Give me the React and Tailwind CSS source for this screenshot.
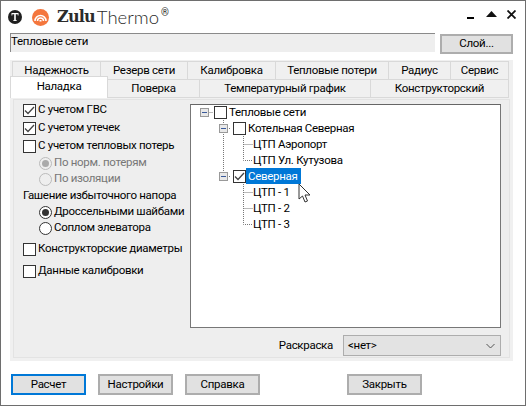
const font = "font-['Roboto',sans-serif]"

const topTabs = [
  ['Надежность', 'w-[88px]'],
  ['Резерв сети', 'w-[87px]'],
  ['Калибровка', 'w-[88px]'],
  ['Тепловые потери', 'w-[113px]'],
  ['Радиус', 'w-[62px]'],
  ['Сервис', 'w-[59px]'],
]

const bottomTabs = [
  ['Поверка', 'w-[92px]'],
  ['Температурный график', 'w-[171px]'],
  ['Конструкторский', 'w-[138px]'],
]

const Check = ({ checked }) => (
  <span className="w-[13px] h-[13px] shrink-0 border border-[#333] bg-white flex items-center justify-center">
    {checked && (
      <svg width="11" height="11" viewBox="0 0 11 11" fill="none" stroke="#444" strokeWidth="1.3">
        <path d="M1 5.5L4 8.5L10 2" />
      </svg>
    )}
  </span>
)

const Radio = ({ on, disabled }) => (
  <span className={`w-[13px] h-[13px] shrink-0 rounded-full border flex items-center justify-center ${disabled ? 'border-[#bbb] bg-[#eee]' : 'border-[#333] bg-white'}`}>
    {on && <span className={`w-[7px] h-[7px] rounded-full ${disabled ? 'bg-[#aaa]' : 'bg-[#333]'}`} />}
  </span>
)

const Toggle = () => (
  <span className="w-[9px] h-[9px] shrink-0 border border-[#999] bg-[#e8e8e8] flex items-center justify-center">
    <span className="w-[5px] h-px bg-[#3a5a9a]" />
  </span>
)

const Btn = ({ label, primary, className = '' }) => (
  <div className={`w-[75px] h-[21px] bg-[#e1e1e1] border-2 flex items-center justify-center text-black ${primary ? 'border-[#0078d7]' : 'border-[#adadad]'} ${className}`}>
    {label}
  </div>
)

const TreeRow = ({ pad, toggle, box, checked, selected, children }) => (
  <div className={`h-4 flex items-center ${pad}`}>
    {toggle && <Toggle />}
    {toggle && <span className="w-[5px]" />}
    {box && <Check checked={checked} />}
    <span className={`pl-[2px] pr-[3px] leading-4 h-4 ${selected ? 'bg-[#0078d7] text-white' : 'text-black'}`}>{children}</span>
  </div>
)

const Opt = ({ children, className = '' }) => (
  <div className={`flex items-center gap-[2px] whitespace-nowrap ${className}`}>{children}</div>
)

export default function App() {
  return (
    <div className={`${font} relative w-[526px] h-[406px] bg-white border border-[#6e6e6e] text-[11.5px] tracking-[-0.3px] overflow-hidden`}>
      {/* title */}
      <div className="h-[32px] pl-[7px] flex items-center tracking-normal">
        <svg width="42" height="17" viewBox="0 0 42 17" className="mt-[1px]">
          <circle cx="7" cy="8" r="7" fill="#1f1f1f" />
          <path d="M3.500 4h7v2.500h-.8V5.200H7.800v6h1v.8H5.200v-.8h1v-6H4.300v1.300h-.8z" fill="#fff" />
          <circle cx="32.500" cy="8.500" r="8.500" fill="#f4763d" />
          <path d="M27 12a5.500 5.500 0 0 1 11 0M29.500 12a3 3 0 0 1 6 0" fill="none" stroke="#fff" strokeWidth="1.500" />
          <rect x="31.500" y="11" width="2" height="1.500" fill="#fff" />
        </svg>
        <span className="ml-[7px] text-[#2b2b2b] flex items-start">
          <span className="font-['DejaVu_Serif',serif] font-bold text-[16px] leading-[24px] tracking-[-0.8px]">Zulu</span>
          <span className="font-['Lato',sans-serif] font-light text-[18.5px] leading-[24px] ml-[2px]">Thermo</span>
          <span className="text-[10px] ml-[2px] mt-[3px] leading-none">®</span>
        </span>
        <div className="ml-auto flex items-center pr-[9px]">
          <span className="w-[7px] h-[2px] bg-black mt-[2px]" />
          <svg width="11" height="6" viewBox="0 0 11 6" className="ml-[12px] mb-[7px]"><path d="M5.500 0L11 6H0z" fill="#111" /></svg>
          <svg width="9" height="9" viewBox="0 0 9 9" className="ml-[10px] mb-[5px]"><path d="M.5.500l8 8M8.500.500l-8 8" stroke="#111" strokeWidth="1.800" /></svg>
        </div>
      </div>

      {/* name field */}
      <div className="h-[21px] ml-[9px] flex items-start">
        <div className="w-[425px] h-[19px] bg-[#eeeeee] border-t border-l border-[#8a8a8a] leading-[15px] text-black truncate">Тепловые сети</div>
        <div className="w-[73px] h-[20px] ml-[5px] mt-px bg-[#e1e1e1] border-2 border-[#adadad] flex items-center justify-center text-black">Слой...</div>
      </div>

      {/* tabs */}
      <div className="mt-[6px] ml-[9px] w-[503px] h-[301px] bg-[#f0f0f0]">
        <div className="flex pl-[2px] pt-[1px] h-[19px]">
          {topTabs.map(([t, w]) => (
            <div key={t} className={`${w} h-[19px] border border-[#d9d9d9] border-r-0 last:border-r flex items-center justify-center text-black`}>{t}</div>
          ))}
        </div>
        <div className="flex items-end h-[19px]">
          <div className="relative z-10 w-[98px] h-[22px] -mt-[3px] bg-white border border-b-0 border-[#d9d9d9] flex items-center justify-center text-black pb-[2px]">Наладка</div>
          {bottomTabs.map(([t, w]) => (
            <div key={t} className={`${w} h-[19px] border border-l-0 border-[#d9d9d9] flex items-center justify-center text-black`}>{t}</div>
          ))}
        </div>

        {/* panel */}
        <div className="mt-[1px] mx-[3px] h-[259px] w-[497px] border border-[#e3e3e3] bg-[#eeeeee] flex">
          <div className="w-[176px] shrink-0 pl-[9px] pt-[1px] text-black">
            <Opt className="h-[18px]"><Check checked />С учетом ГВС</Opt>
            <Opt className="h-[18px]"><Check checked />С учетом утечек</Opt>
            <Opt className="h-[18px]"><Check />С учетом тепловых потерь</Opt>
            <Opt className="h-[16px] pl-[16px] text-[#777]"><Radio on disabled />По норм. потерям</Opt>
            <Opt className="h-[16px] pl-[16px] text-[#777]"><Radio disabled />По изоляции</Opt>
            <Opt className="h-[17px]">Гашение избыточного напора</Opt>
            <Opt className="h-[16px] pl-[16px]"><Radio on />Дроссельными шайбами</Opt>
            <Opt className="h-[16px] pl-[16px]"><Radio />Соплом элеватора</Opt>
            <Opt className="h-[18px] mt-[4px]"><Check />Конструкторские диаметры</Opt>
            <Opt className="h-[18px] mt-[4px]"><Check />Данные калибровки</Opt>
          </div>

          <div className="flex-1 pt-[4px] pr-[8px]">
            <div className="relative h-[224px] bg-white border border-[#777] border-t-[#666] pl-[9px] text-black">
              <svg width="120" height="130" className="absolute left-0 top-0" fill="none" stroke="#777" strokeDasharray="1 1">
                <path d="M18.500 7.500h4M32.500 15v52M36 23.500h4M36 71.500h4M52.500 31v24.500h9M52.500 39.500h9M52.500 79v40.500h9M52.500 87.500h9M52.500 103.500h9" />
              </svg>
              <div className="relative -mt-px">
                <TreeRow pad="pl-0" toggle box>Тепловые сети</TreeRow>
                <TreeRow pad="pl-[19px]" toggle box>Котельная Северная</TreeRow>
                <TreeRow pad="pl-[51px]">ЦТП Аэропорт</TreeRow>
                <TreeRow pad="pl-[51px]">ЦТП Ул. Кутузова</TreeRow>
                <TreeRow pad="pl-[19px]" toggle box checked selected>Северная</TreeRow>
                <TreeRow pad="pl-[51px]">ЦТП - 1</TreeRow>
                <TreeRow pad="pl-[51px]">ЦТП - 2</TreeRow>
                <TreeRow pad="pl-[51px]">ЦТП - 3</TreeRow>
              </div>
              <svg width="14" height="20" viewBox="0 0 14 20" className="absolute left-[107px] top-[78px]">
                <path d="M1 1v15l3.500-3 2.500 6 2.500-1-2.500-6h5z" fill="#fff" stroke="#333" />
              </svg>
            </div>
            <div className="mt-[7px] flex items-center justify-end">
              <span className="mr-[10px] text-black">Раскраска</span>
              <div className="w-[158px] h-[21px] bg-[#e3e3e3] border border-[#adadad] pl-[4px] pr-[5px] flex items-center justify-between text-black">
                &lt;нет&gt;
                <svg width="9" height="6" viewBox="0 0 9 6" fill="none" stroke="#555"><path d="M.5 1l4 4 4-4" /></svg>
              </div>
            </div>
          </div>
        </div>
      </div>

      {/* bottom buttons */}
      <div className="mt-[13px] pl-[10px] flex">
        <Btn label="Расчет" primary />
        <Btn label="Настройки" className="ml-[12px]" />
        <Btn label="Справка" className="ml-[12px]" />
        <Btn label="Закрыть" className="ml-[87px]" />
      </div>
    </div>
  )
}
